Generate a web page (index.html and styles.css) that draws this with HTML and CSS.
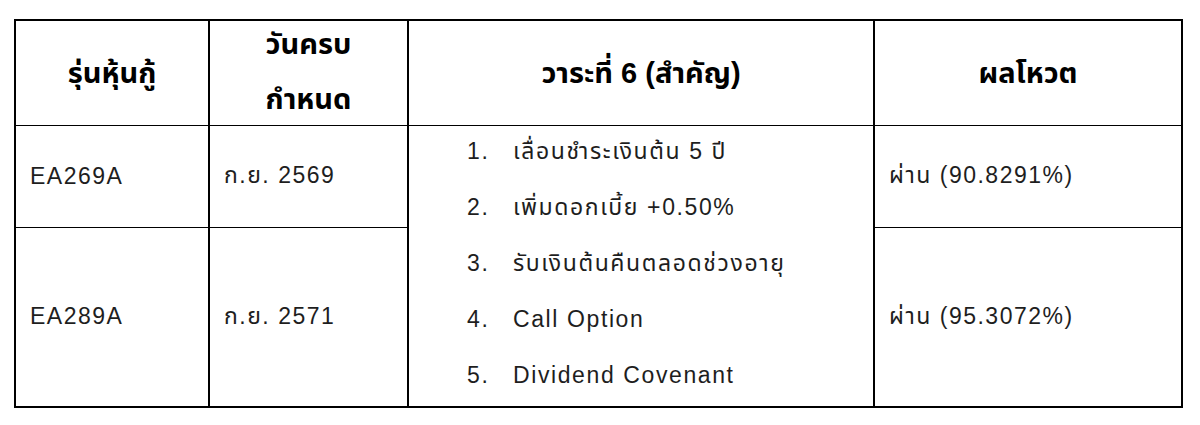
FILE: index.html
```html
<!DOCTYPE html>
<html lang="th">
<head>
<meta charset="utf-8">
<link rel="stylesheet" href="styles.css">
</head>
<body>
<table class="vote">
  <colgroup>
    <col class="c1"><col class="c2"><col class="c3"><col class="c4">
  </colgroup>
  <thead>
    <tr class="head">
      <th>รุ่นหุ้นกู้</th>
      <th><span class="hline">วันครบ</span><span class="hline">กำหนด</span></th>
      <th>วาระที่ 6 (สำคัญ)</th>
      <th>ผลโหวต</th>
    </tr>
  </thead>
  <tbody>
    <tr class="r1">
      <td class="cell">EA269A</td>
      <td class="cell">ก.ย. 2569</td>
      <td class="agenda" rowspan="2">
        <ol class="items">
          <li><span class="num">1.</span><span>เลื่อนชำระเงินต้น 5 ปี</span></li>
          <li><span class="num">2.</span><span>เพิ่มดอกเบี้ย +0.50%</span></li>
          <li><span class="num">3.</span><span>รับเงินต้นคืนตลอดช่วงอายุ</span></li>
          <li><span class="num">4.</span><span>Call Option</span></li>
          <li><span class="num">5.</span><span>Dividend Covenant</span></li>
        </ol>
      </td>
      <td class="cell">ผ่าน (90.8291%)</td>
    </tr>
    <tr class="r2">
      <td class="cell">EA289A</td>
      <td class="cell">ก.ย. 2571</td>
      <td class="cell">ผ่าน (95.3072%)</td>
    </tr>
  </tbody>
</table>
</body>
</html>
```

FILE: styles.css
```css
html, body {
  margin: 0;
  padding: 0;
  background: #ffffff;
}
body {
  padding: 19px 0 0 14px;
  font-family: "Liberation Sans", "Noto Sans Thai", "Tahoma", sans-serif;
  color: #1e1e1e;
}
.vote {
  border-collapse: collapse;
  table-layout: fixed;
  width: 1167px;
  border: 2px solid #000;
}
.c1 { width: 194px; }
.c2 { width: 199px; }
.c3 { width: 466px; }
.c4 { width: 308px; }
.vote th, .vote td {
  border-left: 2px solid #000;
  border-right: 2px solid #000;
  border-top: 1px solid #000;
  border-bottom: 1px solid #000;
  padding: 0;
}
.head { height: 105px; }
.head th {
  font-weight: bold;
  font-size: 29px;
  color: #000;
  text-align: center;
  vertical-align: middle;
  line-height: 40px;
}
.hline {
  display: block;
  line-height: 55px;
}
.hline:first-child {
  margin-top: -6px;
}
.hline:last-child {
  margin-bottom: -4px;
}
.r1 { height: 102px; }
.r2 { height: 180px; }
.cell {
  font-size: 23px;
  letter-spacing: 1.5px;
  padding-left: 14px !important;
  vertical-align: middle;
  text-align: left;
}
.agenda {
  vertical-align: top;
  font-size: 23px;
  letter-spacing: 1.6px;
}
.items {
  list-style: none;
  margin: -3px 0 0 0;
  padding: 0 0 0 58px;
}
.items li {
  display: flex;
  line-height: 56px;
  height: 56px;
}
.num {
  width: 46px;
  flex: none;
}
```
